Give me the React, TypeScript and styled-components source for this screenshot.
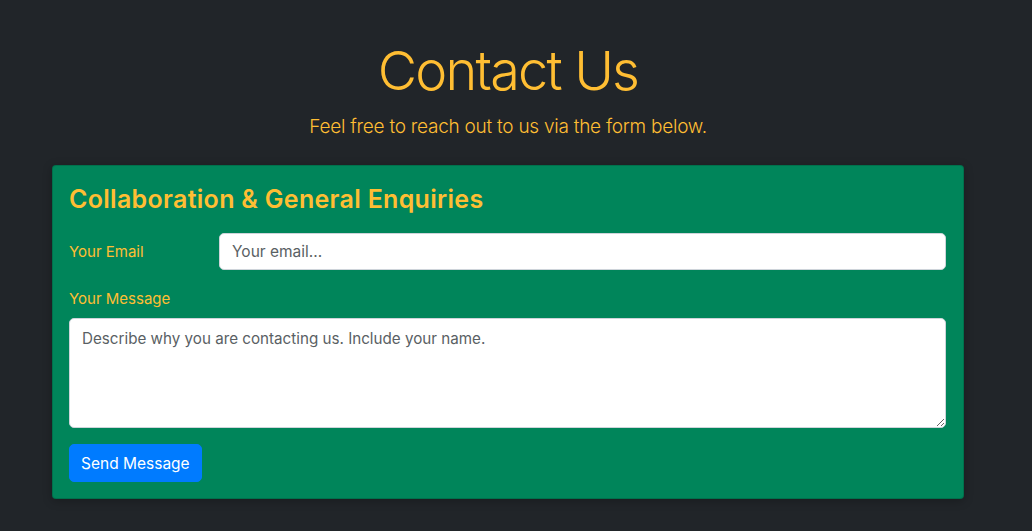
import React from "react";
import styled, { createGlobalStyle } from "styled-components";

const Global = createGlobalStyle`
  html, body { margin: 0; padding: 0; background: #212529; }
  body { font-family: Inter, "Noto Sans", sans-serif; }
  * { box-sizing: border-box; }
`;

const Page = styled.main`
  min-height: 531px;
  padding: 37px 0 30px 52px;
  display: flex;
  flex-direction: column;
  align-items: flex-start;
`;

const Header = styled.header`
  width: 912px;
  display: flex;
  flex-direction: column;
  align-items: center;
  color: #ffbe33;
`;

const Title = styled.h1`
  margin: 0 0 8px;
  font-size: 54px;
  font-weight: 300;
  line-height: 67px;
  letter-spacing: -1.8px;
`;

const Lead = styled.p`
  margin: 0 0 23px;
  font-size: 19px;
  font-weight: 300;
  line-height: 30px;
  letter-spacing: -0.25px;
`;

const Card = styled.section`
  width: 912px;
  background: #00855a;
  border: 1px solid rgba(0, 0, 0, 0.15);
  border-radius: 4px;
  padding: 16px 17px 16px 16px;
  display: flex;
  flex-direction: column;
  box-shadow: 0 2px 10px rgba(0, 0, 0, 0.25);
`;

const CardTitle = styled.h2`
  margin: 0 0 17px;
  font-size: 25px;
  font-weight: 600;
  line-height: 34px;
  color: #ffbe33;
  letter-spacing: 0.3px;
`;

const Row = styled.div`
  display: grid;
  grid-template-columns: 150px 1fr;
  align-items: center;
  margin-bottom: 17px;
`;

const Label = styled.label`
  font-size: 15px;
  line-height: 24px;
  color: #ffbe33;
`;

const StackLabel = styled(Label)`
  display: block;
  margin-bottom: 7px;
`;

const fieldBase = `
  width: 100%;
  font-family: Inter, "Noto Sans", sans-serif;
  font-size: 15.5px;
  color: #495057;
  background: #fff;
  border: 1px solid #ced4da;
  border-radius: 5px;
  padding: 6px 12px;
  outline: none;
  &::placeholder { color: #5a5f64; opacity: 1; }
`;

const Input = styled.input`
  ${fieldBase}
  height: 37px;
`;

const TextArea = styled.textarea`
  ${fieldBase}
  font-size: 15.2px;
  padding-top: 8px;
  height: 110px;
  line-height: 24px;
  resize: vertical;
  display: block;
  margin-bottom: 16px;
`;

const Button = styled.button`
  align-self: flex-start;
  height: 38px;
  padding: 0 11px;
  font-family: Inter, "Noto Sans", sans-serif;
  font-size: 15.5px;
  color: #fff;
  background: #007bff;
  border: 1px solid #007bff;
  border-radius: 5px;
  cursor: pointer;
`;

export default function App() {
  return (
    <>
      <Global />
      <Page>
        <Header>
          <Title>Contact Us</Title>
          <Lead>Feel free to reach out to us via the form below.</Lead>
        </Header>
        <Card>
          <CardTitle>Collaboration &amp; General Enquiries</CardTitle>
          <Row>
            <Label htmlFor="email">Your Email</Label>
            <Input id="email" type="email" placeholder="Your email..." />
          </Row>
          <StackLabel htmlFor="msg">Your Message</StackLabel>
          <TextArea id="msg" placeholder="Describe why you are contacting us. Include your name." />
          <Button type="button">Send Message</Button>
        </Card>
      </Page>
    </>
  );
}
